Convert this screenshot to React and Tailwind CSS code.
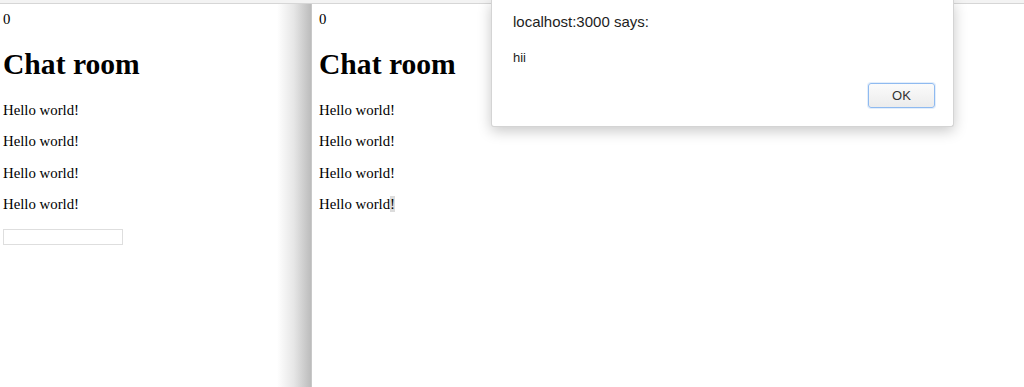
export default function App() {
  const serif = "font-['Liberation_Serif','Times_New_Roman',serif]";
  const Pane = ({ last }) => (
    <div className={`${serif} text-black text-[14.8px] leading-[17px] flex flex-col`}>
      <div className="mt-[7px]">0</div>
      <h1 className="mt-[19px] mb-[21px] text-[29.6px] leading-[34px] font-bold">Chat room</h1>
      <div className="flex flex-col gap-[14.3px]">
        <p>Hello world!</p>
        <p>Hello world!</p>
        <p>Hello world!</p>
        {last ? (
          <p>
            Hello world<span className="bg-[#dcdcdc]">!</span>
          </p>
        ) : (
          <p>Hello world!</p>
        )}
      </div>
    </div>
  );

  return (
    <div className="relative w-[1024px] h-[387px] bg-white overflow-hidden">
      <div className="h-[4px] bg-[#f3f3f3] border-b border-[#d6d6d6]" />
      <div className="flex h-[383px]">
        <div className="relative w-[311px] shrink-0 pl-[3px] bg-white">
          <Pane />
          <div className="mt-[16px] w-[120px] h-[16px] border border-[#dedede] bg-white" />
          <div className="absolute top-0 right-0 h-full w-[34px] bg-gradient-to-r from-white/0 via-[#e6e6e6] to-[#bcbcbc]" />
        </div>
        <div className="w-[1px] bg-[#c8c8c8]" />
        <div className="flex-1 pl-[7px] bg-white">
          <Pane last />
        </div>
      </div>

      <div className="absolute left-[491px] top-0 w-[463px] h-[127px] bg-white border border-[#d4d4d4] border-t-0 rounded-b-[3px] shadow-[0_4px_14px_rgba(0,0,0,0.22)] font-['Liberation_Sans',Arial,sans-serif] text-[#1d1d1d]">
        <div className="pl-[21px] pt-[13px] text-[15px] leading-[18px]">localhost:3000 says:</div>
        <div className="pl-[21px] mt-[19px] text-[13px] leading-[16px]">hii</div>
        <div className="flex justify-end pr-[18px] mt-[17px]">
          <button className="w-[67px] h-[25px] rounded-[3px] border border-[#8fbaf0] bg-gradient-to-b from-[#fbfbfb] to-[#ececec] text-[13px] text-[#333] leading-none shadow-[0_0_0_1px_rgba(143,186,240,0.25)]">
            OK
          </button>
        </div>
      </div>
    </div>
  );
}
